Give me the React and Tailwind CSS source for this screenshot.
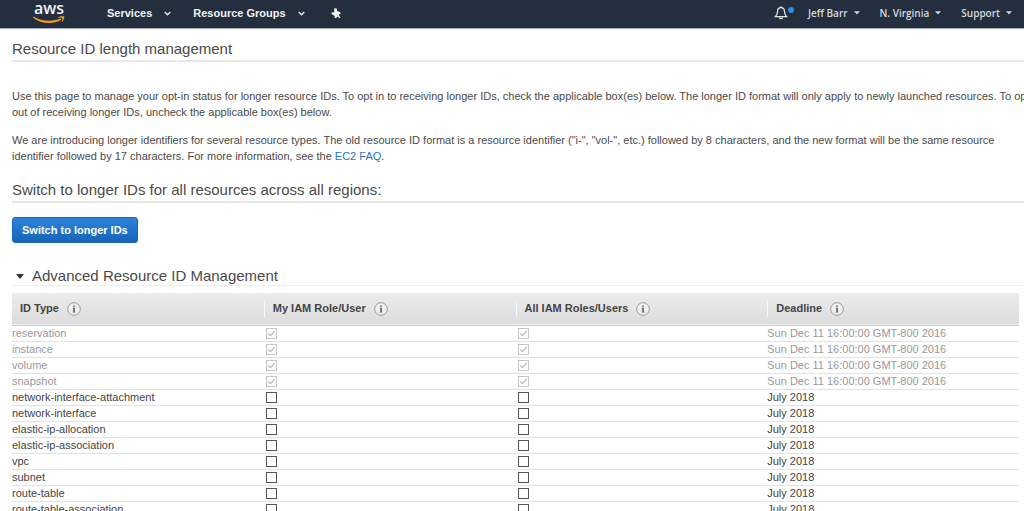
import { useState } from 'react'

const HEADERS = ['ID Type', 'My IAM Role/User', 'All IAM Roles/Users', 'Deadline']

const LOCKED_DEADLINE = 'Sun Dec 11 16:00:00 GMT-800 2016'

const RESOURCES = [
  { id: 'reservation', locked: true, deadline: LOCKED_DEADLINE },
  { id: 'instance', locked: true, deadline: LOCKED_DEADLINE },
  { id: 'volume', locked: true, deadline: LOCKED_DEADLINE },
  { id: 'snapshot', locked: true, deadline: LOCKED_DEADLINE },
  { id: 'network-interface-attachment', deadline: 'July 2018' },
  { id: 'network-interface', deadline: 'July 2018' },
  { id: 'elastic-ip-allocation', deadline: 'July 2018' },
  { id: 'elastic-ip-association', deadline: 'July 2018' },
  { id: 'vpc', deadline: 'July 2018' },
  { id: 'subnet', deadline: 'July 2018' },
  { id: 'route-table', deadline: 'July 2018' },
  { id: 'route-table-association', deadline: 'July 2018' },
]

function AwsLogo() {
  return (
    <a href="#home" aria-label="AWS" className="flex w-8 flex-col items-center pb-0.5">
      <span className="font-['Open_Sans',sans-serif] text-[16px] leading-4 font-semibold text-[#f2f2f2]">aws</span>
      <svg width="32" height="8" viewBox="0 0 32 8" fill="none" aria-hidden="true">
        <path d="M0.200 0.500C8 5.400 19.500 6 27.600 2.600L28.400 3.800C20 8.600 7.500 8.200 0 1.500Z" fill="#f7981d" />
        <path d="M25.300 1.200C27.200 0 30.400 0 31.200 0.600C31.700 1.700 30.800 4.400 29.200 5.800C28.700 6.200 28.400 5.900 28.700 5.400C29.200 4.200 29.700 2.600 29.300 2C28.800 1.500 27.200 1.600 25.700 1.900C25.200 1.900 24.900 1.500 25.300 1.200Z" fill="#f7981d" />
      </svg>
    </a>
  )
}

function Chevron() {
  return (
    <svg width="7" height="5" viewBox="0 0 7 5" fill="none" stroke="#e6e6e6" strokeWidth="1.400" aria-hidden="true">
      <path d="M0.700 0.900L3.500 3.700L6.300 0.900" />
    </svg>
  )
}

function Caret() {
  return (
    <svg width="6" height="4" viewBox="0 0 6 4" fill="#d5d9de" aria-hidden="true">
      <path d="M0 0.300H6L3 3.600Z" />
    </svg>
  )
}

function Pin() {
  return (
    <svg width="10" height="11" viewBox="0 0 10 11" fill="#f2f2f2" aria-hidden="true">
      <path d="M3.200 0.300L5.600 0.400L6.200 3L9.200 4.300L9.700 5.800L7.700 6.600L9.400 9.700L9 10.300L6.300 8.500L5.200 10L3.900 9.900L3.500 7.800L0.600 6L0.500 4.500L3.200 4.200Z" />
    </svg>
  )
}

function Bell() {
  return (
    <svg width="14" height="14" viewBox="0 0 14 14" fill="none" stroke="#e6e8ea" strokeWidth="1.200" aria-hidden="true">
      <path d="M7 1.700C4.700 1.700 3.600 3.400 3.600 5.300C3.600 8.200 2.600 9.200 1.300 10.700H12.700C11.400 9.200 10.400 8.200 10.400 5.300C10.400 3.400 9.300 1.700 7 1.700Z" />
      <path d="M6.200 1.200H7.800M5.500 11.400C5.700 13.200 8.300 13.200 8.500 11.400" />
    </svg>
  )
}

function InfoIcon() {
  return (
    <svg width="14" height="14" viewBox="0 0 14 14" fill="none" aria-hidden="true">
      <circle cx="7" cy="7" r="6.300" fill="#f0f0f0" stroke="#999" />
      <path d="M6.200 3.400H7.800V4.800H6.200ZM5.800 5.800H7.800V9.700H8.400V10.400H5.700V9.700H6.300V6.500H5.800Z" fill="#555" />
    </svg>
  )
}

function NavButton({ children, icon, className }) {
  return (
    <button type="button" className={`flex items-center ${className}`}>
      {children}
      {icon}
    </button>
  )
}

function TopBar() {
  return (
    <header className="flex h-[29px] shrink-0 items-center justify-between border-b border-[#a5abb5] bg-[#232f3e] pb-0.5 pl-[33px] pr-3 text-[11px] font-bold text-[#f2f2f2]">
      <div className="flex items-center">
        <AwsLogo />
        <nav className="ml-[42px] flex items-center gap-[22px]">
          <NavButton icon={<Chevron />} className="gap-3">Services</NavButton>
          <NavButton icon={<Chevron />} className="gap-3">Resource Groups</NavButton>
          <button type="button" aria-label="Pin shortcuts" className="px-1"><Pin /></button>
        </nav>
      </div>
      <div className="flex items-center gap-5 font-['Open_Sans',sans-serif] text-[10px] font-semibold text-[#d5d9de]">
        <button type="button" aria-label="Notifications" className="relative -mr-1.5 pr-1.5">
          <Bell />
          <span className="absolute right-0 top-px size-1.5 rounded-full bg-[#2e8de5]" />
        </button>
        <NavButton icon={<Caret />} className="gap-1.5">Jeff Barr</NavButton>
        <NavButton icon={<Caret />} className="gap-1.5">N. Virginia</NavButton>
        <NavButton icon={<Caret />} className="gap-1.5">Support</NavButton>
      </div>
    </header>
  )
}

function OptInBox({ label, locked, checked, onChange }) {
  return (
    <span className="relative ml-0.5 block size-[11px]">
      <input
        type="checkbox"
        aria-label={label}
        disabled={locked}
        checked={checked}
        onChange={onChange}
        className="block size-[11px] appearance-none border border-[#555] bg-white disabled:border-[#c8c8c8]"
      />
      {checked && (
        <svg viewBox="0 0 11 11" fill="none" stroke={locked ? '#b5b5b5' : '#444'} strokeWidth="1.200" className="pointer-events-none absolute inset-0 size-[11px]" aria-hidden="true">
          <path d="M2.300 5.500L4.500 7.700L8.900 2.900" />
        </svg>
      )}
    </span>
  )
}

function ResourceTable() {
  const [optIns, setOptIns] = useState({})

  const toggle = (key) => setOptIns((prev) => ({ ...prev, [key]: !prev[key] }))

  return (
    <table className="w-full table-fixed border-collapse text-left text-[11px] leading-[15px]">
      <thead>
        <tr className="h-8 border-b border-[#ccc] bg-linear-to-b from-[#ececec] to-[#dcdcdc]">
          {HEADERS.map((title, i) => (
            <th key={title} scope="col" className="p-0 font-bold text-[#444]">
              <div className={i === 0 ? 'flex items-center gap-2 pl-2' : 'flex h-4 items-center gap-2 border-l border-[#f8f8f8] pl-2'}>
                {title}
                <InfoIcon />
              </div>
            </th>
          ))}
        </tr>
      </thead>
      <tbody>
        {RESOURCES.map(({ id, locked, deadline }) => (
          <tr key={id} className={`h-4 border-b border-[#e2e2e2] ${locked ? 'text-[#999]' : 'text-[#444]'}`}>
            <td className="p-0">{id}</td>
            {['mine', 'all'].map((scope) => (
              <td key={scope} className="p-0">
                <OptInBox
                  label={`${id} ${scope}`}
                  locked={locked}
                  checked={Boolean(locked || optIns[`${id}:${scope}`])}
                  onChange={() => toggle(`${id}:${scope}`)}
                />
              </td>
            ))}
            <td className="p-0">{deadline}</td>
          </tr>
        ))}
      </tbody>
    </table>
  )
}

export default function App() {
  const [open, setOpen] = useState(true)

  return (
    <div className="flex h-screen flex-col overflow-hidden bg-white font-['Liberation_Sans',Arial,sans-serif] text-[#4a4a4a]">
      <TopBar />
      <main className="pl-3">
        <h1 className="border-b-2 border-[#e8e8e8] pb-0.5 pt-[11px] text-[15px] leading-[18px]">Resource ID length management</h1>

        <div className="mt-[26px] whitespace-nowrap text-[11px] leading-4">
          <p>
            Use this page to manage your opt-in status for longer resource IDs. To opt in to receiving longer IDs, check the applicable box(es) below. The longer ID format will only apply to newly launched resources. To opt
            <br />
            out of receiving longer IDs, uncheck the applicable box(es) below.
          </p>
          <p className="mt-3">
            We are introducing longer identifiers for several resource types. The old resource ID format is a resource identifier ("i-", "vol-", etc.) followed by 8 characters, and the new format will be the same resource
            <br />
            identifier followed by 17 characters. For more information, see the <a href="#ec2-faq" className="text-[#1f74c4]">EC2 FAQ</a>.
          </p>
        </div>

        <h2 className="mt-[17px] border-b-2 border-[#e8e8e8] pb-0.5 text-[15px] leading-[18px]">Switch to longer IDs for all resources across all regions:</h2>

        <button type="button" className="mt-3.5 block h-[26px] rounded-[3px] border border-[#1b65b5] bg-linear-to-b from-[#2d83dc] to-[#1764b8] px-[9px] text-[11px] font-bold text-white">
          Switch to longer IDs
        </button>

        <h2 className="mt-6 border-b border-[#eee] text-[15px] leading-[18px]">
          <button type="button" aria-expanded={open} onClick={() => setOpen(!open)} className="flex items-center gap-2 pl-1">
            <svg width="8" height="5" viewBox="0 0 8 5" fill="#333" className={open ? '' : '-rotate-90'} aria-hidden="true">
              <path d="M0 0H8L4 5Z" />
            </svg>
            Advanced Resource ID Management
          </button>
        </h2>

        {open && (
          <div className="mr-[5px] mt-[7px]">
            <ResourceTable />
          </div>
        )}
      </main>
    </div>
  )
}
